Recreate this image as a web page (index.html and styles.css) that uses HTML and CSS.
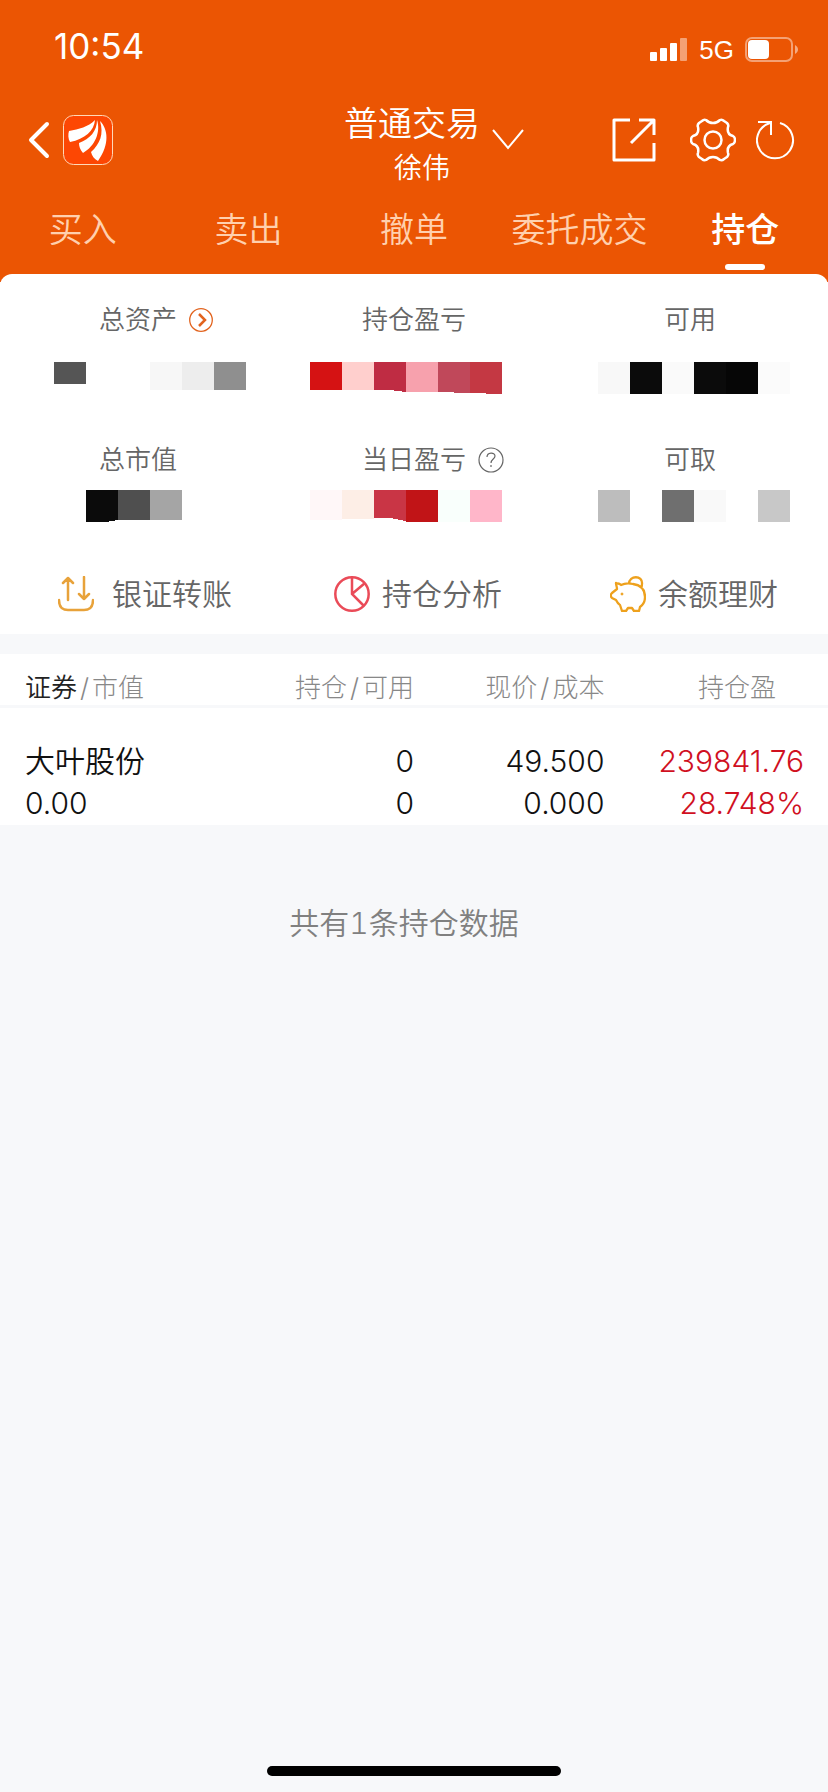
FILE: index.html
```html
<!DOCTYPE html>
<html lang="zh-CN">
<head>
  <meta charset="UTF-8">
  <meta name="viewport" content="width=device-width, initial-scale=1.0">
  <title>普通交易 - 持仓</title>
  <link rel="stylesheet" href="styles.css">
</head>
<body>
  <header class="header">
    <div class="status">
      <span class="time">10:54</span>
      <div class="status-right">
        <svg width="38" height="24" viewBox="0 0 38 24" fill="#fff">
          <rect x="0" y="14" width="7" height="9" rx="1"/>
          <rect x="10" y="10" width="7" height="13" rx="1"/>
          <rect x="20" y="5" width="7" height="18" rx="1"/>
          <rect x="30" y="0" width="7" height="23" rx="1" opacity="0.45"/>
        </svg>
        <span class="network">5G</span>
        <svg width="54" height="26" viewBox="0 0 54 26">
          <rect x="1" y="1" width="46" height="23" rx="6" fill="none" stroke="#fff" stroke-opacity="0.45" stroke-width="2"/>
          <rect x="3" y="3" width="21" height="19" rx="4" fill="#fff"/>
          <path d="M50 8c4 2 4 7 0 9z" fill="#fff" opacity="0.5"/>
        </svg>
      </div>
    </div>

    <nav class="nav">
      <div class="nav-left">
        <button class="icon-btn" aria-label="返回">
          <svg width="22" height="38" viewBox="0 0 22 38" fill="none" stroke="#fff" stroke-width="4" stroke-linecap="round" stroke-linejoin="round"><path d="M19 3L3 19l16 16"/></svg>
        </button>
        <svg class="logo" width="50" height="50" viewBox="0 0 50 50">
          <rect x="0.5" y="0.5" width="49" height="49" rx="10" fill="#fd4703" stroke="#ffd9b8"/>
          <path fill="#fff" d="M6 16C16 14 25 12 32 5C31 16 22 24 7 27C5 24 5 19 6 16z"/>
          <path fill="#fff" d="M34 5C38 17 32 31 20 38C17 35 16 31 16 28C27 24 34 16 34 5z"/>
          <path fill="#fff" d="M37 6C45 14 47 29 35 46C31 44 29 41 28 37C37 29 41 19 37 6z"/>
        </svg>
      </div>
      <button class="account">
        <span class="account-text">
          <span class="account-type">普通交易</span>
          <span class="account-name">徐伟</span>
        </span>
        <svg width="32" height="22" viewBox="0 0 32 22" fill="none" stroke="#fff" stroke-width="2"><path d="M1 1l15 18L31 1"/></svg>
      </button>
      <div class="nav-right">
        <button class="icon-btn" aria-label="分享">
          <svg width="44" height="44" viewBox="0 0 44 44" fill="none" stroke="#fff" stroke-width="3" stroke-linejoin="round"><path d="M18 2H2v40h40V25M27 2h15v15M42 2L19 25"/></svg>
        </button>
        <button class="icon-btn gear" aria-label="设置">
          <svg width="46" height="44" viewBox="0 0 46 44" fill="none" stroke="#fff" stroke-width="2.5" stroke-linejoin="round">
            <path d="M12 3Q14 1 16 2C20 6 26 6 30 2Q32 1 34 3L37 5Q39 7 38 9C37 14 39 17 43 18Q45 19 45 22Q45 25 43 26C39 27 37 30 38 35Q39 37 37 39L34 41Q32 43 30 42C26 38 20 38 16 42Q14 43 12 41L9 39Q7 37 8 35C9 30 7 27 3 26Q1 25 1 22Q1 19 3 18C7 17 9 14 8 9Q7 7 9 5Z"/>
            <circle cx="23" cy="22" r="8.5"/>
          </svg>
        </button>
        <button class="icon-btn" aria-label="刷新">
          <svg width="40" height="40" viewBox="0 0 40 40" fill="none" stroke="#fff" stroke-width="2"><path d="M24 3A18 18 0 1 1 14 3M2 2h13v13"/></svg>
        </button>
      </div>
    </nav>

    <div class="tabs">
      <a class="tab" href="#buy">买入</a>
      <a class="tab" href="#sell">卖出</a>
      <a class="tab" href="#cancel">撤单</a>
      <a class="tab" href="#orders">委托成交</a>
      <a class="tab active" href="#positions">持仓</a>
    </div>
  </header>

  <main class="main">
    <section class="summary">
      <div class="labels">
        <div class="label">
          <span class="label-text">总资产</span>
          <svg width="24" height="24" viewBox="0 0 24 24" fill="none" stroke="#e2641f"><circle cx="12" cy="12" r="11.3" stroke-width="1.3"/><path d="M10 6l6 6-6 6" stroke-width="2.5"/></svg>
        </div>
        <div class="label"><span class="label-text">持仓盈亏</span></div>
        <div class="label"><span class="label-text">可用</span></div>
      </div>
      <svg class="mask" viewBox="0 0 828 32" shape-rendering="crispEdges">
        <path fill="#555" d="M54 0h32v22H54z"/>
        <path fill="#f7f7f7" d="M150 0h32v28h-32z"/>
        <path fill="#ededed" d="M182 0h32v28h-32z"/>
        <path fill="#8f8f8f" d="M214 0h32v28h-32z"/>
        <path fill="#d51213" d="M310 0h32v28h-32z"/>
        <path fill="#ffcfcd" d="M342 0h32v28h-32z"/>
        <path fill="#bf2c43" d="M374 0h32v30l-16-2h-16z"/>
        <path fill="#f7a1ad" d="M406 0h32v30h-32z"/>
        <path fill="#c0485a" d="M438 0h32v31l-32-1z"/>
        <path fill="#c43843" d="M470 0h32v32l-32-1z"/>
        <path fill="#f8f8f8" d="M598 0h32v32h-32z"/>
        <path fill="#0b0b0b" d="M630 0h32v32h-32z"/>
        <path fill="#fafafa" d="M662 0h32v32h-32z"/>
        <path fill="#0b0b0b" d="M694 0h32v32h-32z"/>
        <path fill="#060606" d="M726 0h32v32h-32z"/>
        <path fill="#fbfbfb" d="M758 0h32v32h-32z"/>
      </svg>

      <div class="labels labels-second">
        <div class="label"><span class="label-text">总市值</span></div>
        <div class="label">
          <span class="label-text">当日盈亏</span>
          <svg width="26" height="26" viewBox="0 0 26 26" fill="none" stroke="#666" stroke-width="1.2"><circle cx="13" cy="13" r="12"/><path d="M9 10c0-5 8-5 8-1 0 3-4 3-4 7M13 18v2"/></svg>
        </div>
        <div class="label"><span class="label-text">可取</span></div>
      </div>
      <svg class="mask" viewBox="0 0 828 32" shape-rendering="crispEdges">
        <path fill="#0b0b0b" d="M86 0h32v30l-12 2H86z"/>
        <path fill="#4f4f4f" d="M118 0h32v30h-32z"/>
        <path fill="#a5a5a5" d="M150 0h32v30h-32z"/>
        <path fill="#fff7f8" d="M310 0h32v30h-32z"/>
        <path fill="#fdeee6" d="M342 0h32v29h-32z"/>
        <path fill="#c93545" d="M374 0h32v31l-16-3h-16z"/>
        <path fill="#c11417" d="M406 0h32v32h-32z"/>
        <path fill="#f9fffc" d="M438 0h32v32h-32z"/>
        <path fill="#ffb6c9" d="M470 0h32v32h-32z"/>
        <path fill="#bdbdbd" d="M598 0h32v32h-32z"/>
        <path fill="#6f6f6f" d="M662 0h32v32h-32z"/>
        <path fill="#f9f9f9" d="M694 0h32v32h-32z"/>
        <path fill="#c8c8c8" d="M758 0h32v32h-32z"/>
      </svg>

      <div class="actions">
        <button class="action action-transfer">
          <svg width="36" height="36" viewBox="0 0 36 36" fill="none" stroke="#e8a23a" stroke-width="2.5" stroke-linecap="round" stroke-linejoin="round"><path d="M10 24V2M5 7l5-5 5 5M26 1v22M21 18l5 5 5-5M1 24c0 7 3 10 9 10h16c6 0 9-3 9-10"/></svg>
          银证转账
        </button>
        <button class="action">
          <svg width="36" height="36" viewBox="0 0 36 36" fill="none" stroke="#ea4b58" stroke-width="2.5"><circle cx="18" cy="18" r="16.7"/><path d="M18 1v17l12 12M18 18L31 7"/></svg>
          持仓分析
        </button>
        <button class="action">
          <svg width="36" height="36" viewBox="0 0 36 36" fill="none" stroke="#eea11d" stroke-width="2.3" stroke-linejoin="round"><path d="M6 8c2-1 4 0 5 1 4-2 8-2 12-1 8 1 12 6 12 13 0 5-2 8-5 10l-1 4h-5l-2-3h-4l-2 3h-4l-2-6c-2-1-3-3-4-5l-4-2c-2-2-1-4 0-5l5-4c0-2-1-4-1-6zM19 8c0-9 14-9 13 0 0 2 0 3-1 4"/><circle cx="12" cy="18" r="1" fill="#eea11d" stroke-width="1"/></svg>
          余额理财
        </button>
      </div>
    </section>

    <table class="positions">
      <thead>
        <tr>
          <th class="col-name"><span class="sorted">证券</span><span class="slash">/</span>市值</th>
          <th class="col-amount">持仓<span class="slash">/</span>可用</th>
          <th class="col-price">现价<span class="slash">/</span>成本</th>
          <th class="col-profit">持仓盈</th>
        </tr>
      </thead>
      <tbody>
        <tr>
          <td class="col-name">大叶股份<br>0.00</td>
          <td class="col-amount">0<br>0</td>
          <td class="col-price">49.500<br>0.000</td>
          <td class="col-profit up">239841.76<br>28.748%</td>
        </tr>
      </tbody>
    </table>

    <p class="count">共有1条持仓数据</p>
  </main>

  <div class="home-bar"></div>
</body>
</html>
```
FILE: styles.css
```css
* {
  box-sizing: border-box;
}
body {
  margin: 0;
  min-height: 100vh;
  display: flex;
  flex-direction: column;
  font-family: Inter, 'Noto Sans CJK SC', sans-serif;
  font-weight: 350;
  background: #f7f8fa;
  color: #111;
}
button {
  padding: 0;
  border: none;
  background: none;
  font: inherit;
  color: inherit;
  cursor: pointer;
}
svg {
  display: block;
  flex-shrink: 0;
}

/* header */
.header {
  background: #eb5503;
  color: #fff;
  padding-bottom: 12px;
}
.status {
  display: flex;
  justify-content: space-between;
  align-items: center;
  height: 92px;
  padding: 0 29px 0 54px;
}
.time {
  font-size: 35px;
  font-weight: 400;
}
.status-right {
  display: flex;
  align-items: center;
  gap: 11px;
  padding-top: 8px;
}
.network {
  font-family: 'Liberation Sans', sans-serif;
  font-size: 26px;
  line-height: 26px;
}
.nav {
  display: grid;
  grid-template-columns: 1fr auto 1fr;
  align-items: center;
  height: 96px;
  padding: 0 32px 0 28px;
}
.nav-left,
.nav-right {
  display: flex;
  align-items: center;
}
.nav-left {
  gap: 13px;
}
.nav-right {
  justify-content: flex-end;
  gap: 20px;
}
.gear {
  margin-left: 14px;
}
.account {
  display: flex;
  align-items: center;
  gap: 12px;
  padding-left: 44px;
}
.account-text {
  display: flex;
  flex-direction: column;
  align-items: center;
  padding-top: 8px;
}
.account-type {
  font-size: 34px;
  line-height: 48px;
}
.account-name {
  font-size: 28px;
  line-height: 40px;
  padding-left: 20px;
}
.tabs {
  display: grid;
  grid-template-columns: repeat(5, 1fr);
}
.tab {
  display: flex;
  flex-direction: column;
  align-items: center;
  height: 82px;
  font-size: 34px;
  line-height: 84px;
  color: #ffd0ae;
  text-decoration: none;
}
.tab.active {
  color: #fff;
  font-weight: 500;
}
.tab.active::after {
  content: "";
  flex-shrink: 0;
  width: 40px;
  height: 6px;
  margin-top: -8px;
  border-radius: 3px;
  background: #fff;
}

/* account summary */
.main {
  margin-top: -8px;
  border-radius: 12px 12px 0 0;
  overflow: hidden;
}
.summary {
  background: #fff;
  padding-top: 28px;
}
.labels {
  display: grid;
  grid-template-columns: repeat(3, 1fr);
  margin-bottom: 24px;
  font-size: 26px;
  line-height: 36px;
  color: #666;
}
.labels-second {
  margin: 48px 0 12px;
}
.label {
  display: grid;
  grid-template-columns: 1fr auto 1fr;
  align-items: center;
  column-gap: 12px;
}
.label-text {
  grid-column: 2;
}
.mask {
  width: 100%;
}
.actions {
  display: grid;
  grid-template-columns: repeat(3, 1fr);
  padding: 54px 0 22px;
}
.action {
  display: flex;
  align-items: center;
  gap: 12px;
  padding-left: 58px;
  font-size: 30px;
  line-height: 30px;
  color: #666;
}
.action-transfer {
  gap: 18px;
}

/* positions */
.positions {
  width: 100%;
  margin-top: 20px;
  table-layout: fixed;
  border-collapse: collapse;
  background: #fff;
}
.positions th {
  height: 52px;
  padding: 18px 0 0;
  border-bottom: 3px solid #f7f8fa;
  font-size: 26px;
  line-height: 32px;
  font-weight: 300;
  color: #888;
  text-align: right;
}
.positions td {
  padding: 32px 0 1px;
  font-size: 30px;
  line-height: 42px;
  text-align: right;
}
.positions .col-name {
  width: 25%;
  padding-left: 25px;
  text-align: left;
}
.positions .col-amount {
  width: 25%;
}
.positions .col-price {
  width: 23%;
}
.positions .col-profit {
  padding-right: 24px;
}
.positions th.col-profit {
  padding-right: 52px;
}
.sorted {
  color: #222;
  font-weight: 350;
}
.slash {
  padding: 0 3px;
}
.positions .up {
  color: #d0101f;
}
.count {
  margin: 76px 0;
  padding-right: 20px;
  font-size: 30px;
  font-variant-numeric: tabular-nums;
  line-height: 44px;
  text-align: center;
  color: #808080;
}
.home-bar {
  width: 294px;
  height: 10px;
  margin: auto auto 16px;
  border-radius: 5px;
  background: #000;
}
```
